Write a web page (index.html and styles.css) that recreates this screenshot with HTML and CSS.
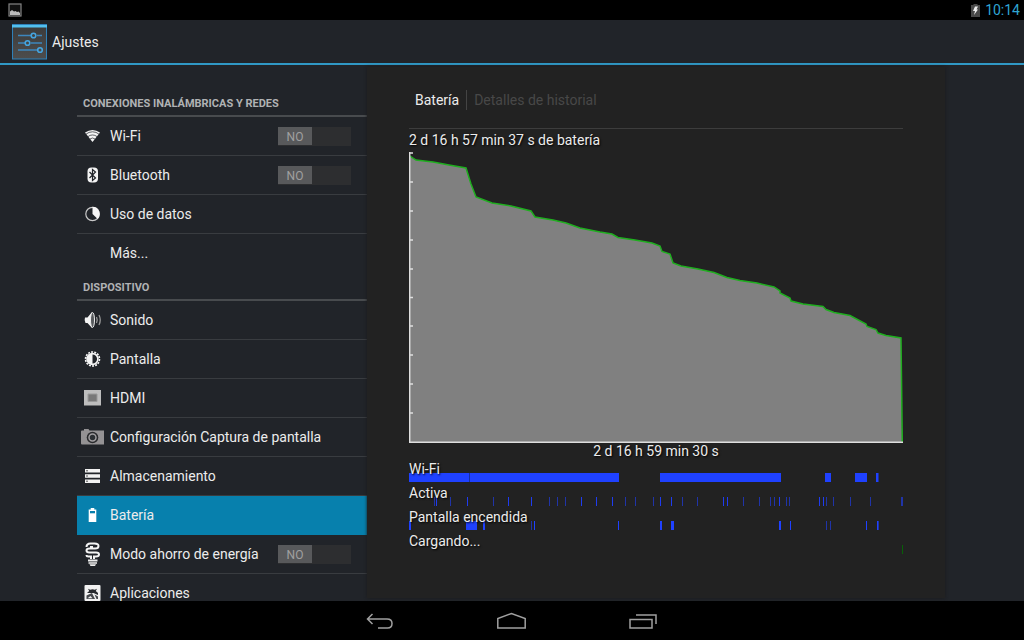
FILE: index.html
```html
<!DOCTYPE html>
<html lang="es">
<head>
<meta charset="utf-8">
<meta name="viewport" content="width=device-width, initial-scale=1">
<title>Ajustes</title>
<link rel="stylesheet" href="styles.css">
</head>
<body>
<div class="status">
  <svg class="status-shot" width="14" height="14" viewBox="0 0 14 14" aria-hidden="true"><rect x="1" y="1" width="12" height="12" fill="#111" stroke="#858585" stroke-width="1.200"/><path d="M2 12V8.500l2-1.500 2 1.500 1.500-.5 1.500 1 1.500-.5L12 10v2z" fill="#bbb"/></svg>
  <div class="status-end">
    <svg width="9" height="13" viewBox="0 0 9 13" aria-hidden="true"><path d="M2.500 0h4v1H9v12H0V1h2.500z" fill="#484848"/><path d="M4 2.500h3L5.500 5.500H7L3 11l1-4H2z" fill="#eee"/></svg>
    <time>10:14</time>
  </div>
</div>
<header class="appbar">
  <svg width="35" height="36" viewBox="0 0 35 36" aria-hidden="true">
    <defs><linearGradient id="tile" x1="0" y1="0" x2="0" y2="1"><stop offset="0" stop-color="#3a3a3a"/><stop offset="1" stop-color="#4d4d4d"/></linearGradient></defs>
    <rect x=".5" y=".5" width="34" height="34.500" fill="url(#tile)" stroke="#2f80b8"/>
    <path d="M0 1h35v2.500H0z" fill="#52c0ee"/>
    <path d="M6 11.500h13M25 11.500h5M6 19h7M19 19h11M6 26h19" stroke="#3d86bd" stroke-width="1.400" fill="none"/>
    <g fill="none" stroke="#45a5e0" stroke-width="1.600"><circle cx="21.500" cy="11.500" r="2.300"/><circle cx="15.500" cy="19" r="2.300"/><circle cx="28" cy="26" r="2.300"/></g>
  </svg>
  <h1>Ajustes</h1>
</header>
<main class="main">
  <nav class="side" aria-label="Ajustes">
    <h2>CONEXIONES INALÁMBRICAS Y REDES</h2>
    <ul>
      <li><a href="#wifi"><svg class="ico" viewBox="0 0 23 24" aria-hidden="true"><path d="M4 8.500q7.500-5 15 0L11.500 18z" fill="#f4f4f4"/><path d="M5 10.200a10 10 0 0 1 13 0M7 12.600a7 7 0 0 1 9 0M9 15a4 4 0 0 1 5 0" fill="none" stroke="#212429" stroke-width=".7"/></svg>Wi-Fi</a>
        <label class="switch"><input type="checkbox" role="switch" aria-label="Wi-Fi"><span>NO</span></label></li>
      <li><a href="#bluetooth"><svg class="ico" viewBox="0 0 23 24" aria-hidden="true"><rect x="6.500" y="4.500" width="10.500" height="15" rx="4" fill="#f4f4f4"/><path d="M8.500 9l6 6-3 2.500v-11l3 2.500-6 6" fill="none" stroke="#212429" stroke-width="1.200"/></svg>Bluetooth</a>
        <label class="switch"><input type="checkbox" role="switch" aria-label="Bluetooth"><span>NO</span></label></li>
      <li><a href="#datos"><svg class="ico" viewBox="0 0 23 24" aria-hidden="true"><circle cx="11.500" cy="12" r="6.700" fill="none" stroke="#c8c8c8" stroke-width="1.200"/><path d="M11.500 4.800a7.200 7.200 0 0 1 5.200 12.200L11.500 12z" fill="#f6f6f6"/></svg>Uso de datos</a></li>
      <li><a href="#mas"><span class="ico"></span>Más...</a></li>
    </ul>
    <h2>DISPOSITIVO</h2>
    <ul>
      <li><a href="#sonido"><svg class="ico" viewBox="0 0 23 24" aria-hidden="true"><path d="M4 9.500h2.500L11 4v16l-4.500-5H4.500Q3 12 4 9.500z" fill="#f4f4f4"/><ellipse cx="11.500" cy="12" rx="2" ry="7.500" fill="#55585b" stroke="#eee"/><path d="M15.500 9q1.400 3 0 6M18 7q2.500 5 0 10" fill="none" stroke="#999" stroke-width="1.300"/></svg>Sonido</a></li>
      <li><a href="#pantalla"><svg class="ico" viewBox="0 0 23 24" aria-hidden="true"><circle cx="11.500" cy="12" r="7" fill="none" stroke="#f4f4f4" stroke-width="1.600" stroke-dasharray="2 1.140"/><circle cx="11.500" cy="12" r="5.400" fill="#212429" stroke="#f4f4f4" stroke-width="1.700"/><path d="M11.500 6.500a5.500 5.500 0 0 0 0 11z" fill="#f4f4f4"/></svg>Pantalla</a></li>
      <li><a href="#hdmi"><svg class="ico" viewBox="0 0 23 24" aria-hidden="true"><path d="M3 4h17v15.500H3z" fill="#bdbdbd"/><path d="M7 8h9v7.500H7z" fill="#787878" stroke="#999"/></svg>HDMI</a></li>
      <li><a href="#captura"><svg class="ico" viewBox="0 0 23 24" aria-hidden="true"><path d="M1 5.500h2V4h4.500l1 1.500H23v14H1q-1 0-1-1v-12q0-1 1-1z" fill="#949294"/><circle cx="11.500" cy="12.500" r="5.800" fill="#292a2d"/><circle cx="11.500" cy="12.500" r="3.500" fill="#2c3034" stroke="#a09ea0" stroke-width="1.500"/></svg>Configuración Captura de pantalla</a></li>
      <li><a href="#almacenamiento"><svg class="ico" viewBox="0 0 23 24" aria-hidden="true"><path d="M4 5h15v3.600H4zM4 10.200h15v3.600H4zM4 15.400h15V19H4z" fill="#f2f2f2"/><path d="M5 6.800h2M5 12h2M5 17.200h2" stroke="#555"/></svg>Almacenamiento</a></li>
      <li class="current"><a href="#bateria" aria-current="page"><svg class="ico" viewBox="0 0 23 24" aria-hidden="true"><path d="M9.700 5h3.600v1.500h2V19H7.700V6.500h2z" fill="#fff"/><path d="M9 8h5v2.300H9z" fill="#0780ad"/></svg>Batería</a></li>
      <li><a href="#ahorro"><svg class="ico" viewBox="0 0 23 24" aria-hidden="true"><path d="M5.500 5q0-3.500 4-3.500h4Q17.500 1.500 17.500 4T14 6.500H8.500Q5.500 6.500 5.500 8.500t3 2H15q3 0 3 2t-3 2h-2v2.500M9 5h3M5.500 13q0 1.500 2 1.500H10V17" fill="none" stroke="#f4f4f4" stroke-width="2"/><path d="M7 17.500h9.500v2H7zM7.500 20.300h8.500v1.400H7.500zM8.500 22.300h6.500L14 24h-4.500z" fill="#eee"/></svg>Modo ahorro de energía</a>
        <label class="switch"><input type="checkbox" role="switch" aria-label="Modo ahorro de energía"><span>NO</span></label></li>
      <li><a href="#aplicaciones"><svg class="ico" viewBox="0 0 23 24" aria-hidden="true"><rect x="3.500" y="4" width="16" height="16" rx="1" fill="#f2f2f2"/><path d="M6 12l2.200-2-1.200-2.200 2.200 1q2.300-1.200 4.600 0l2.200-1-1.200 2.200L17 12v2l-4.500-2z" fill="#26292d"/><path d="M5.500 18v-3.500L11 12l3 6zM13.500 13.500l3.500 2V18h-1.500z" fill="#45484c"/><path d="M6.500 17.200l3-2.200 2 2.200z" fill="#eee"/></svg>Aplicaciones</a></li>
    </ul>
  </nav>
  <section class="panel">
    <ol class="crumbs">
      <li><a href="#bateria">Batería</a></li>
      <li aria-current="page">Detalles de historial</li>
    </ol>
    <h2 class="chart-title">2 d 16 h 57 min 37 s de batería</h2>
    <svg class="chart" viewBox="0 0 494 291" preserveAspectRatio="none" role="img" aria-label="Nivel de batería">
      <path fill="#808080" d="M1 290V4L7 8 24 10 40 13 57 16 62 32 67 45 83 51 102 54 122 59 126 65 144 68 157 71 171 76 191 80 203 82 209 85.500 226 88 243 91 251 94 253 99.500 261 102 264 111 272 114 289 117 305 120.500 318 125.500 331 128.500 348 131 365 135 371 139 371 141 381 146 382 149 394 152 414 154.500 417 157.500 425 160.500 441 163.500 457 172 458 174.500 467 177.500 469 181 477 183.500 492 186 493 290z"/>
      <path class="level" d="M1 4L7 8 24 10 40 13 57 16 62 32 67 45 83 51 102 54 122 59 126 65 144 68 157 71 171 76 191 80 203 82 209 85.500 226 88 243 91 251 94 253 99.500 261 102 264 111 272 114 289 117 305 120.500 318 125.500 331 128.500 348 131 365 135 371 139 371 141 381 146 382 149 394 152 414 154.500 417 157.500 425 160.500 441 163.500 457 172 458 174.500 467 177.500 469 181 477 183.500 492 186 493.300 290"/>
      <path class="axis" d="M.7 0V290.300H494M0 1H4M0 30H4M0 59H4M0 88H4M0 117H4M0 145.500H4M0 174H4M0 203H4M0 232H4M0 261H4"/>
    </svg>
    <p class="duration">2 d 16 h 59 min 30 s</p>
    <div class="track"><svg viewBox="0 0 494 9" preserveAspectRatio="none" aria-hidden="true"><path fill="#1f41ff" d="M0 0H210V9H0zM251 0H372V9H251zM416 0h6v9h-6zM446 0h12v9h-12zM467 0h2.500v9H467z"/><path fill="#172f9c" d="M60 0h1v9h-1z"/></svg><span>Wi-Fi</span></div>
    <div class="track"><svg viewBox="0 0 494 9" preserveAspectRatio="none" aria-hidden="true"><path fill="#1f3cf0" d="M27 0h1v9h-1zM58 0h1v9h-1zM99 0h1v9h-1zM122 0h1v9h-1zM172 0h1v9h-1zM187 0h1v9h-1zM203 0h1v9h-1zM251 0h1v9h-1zM262 0h1v9h-1zM314 0h1v9h-1zM318 0h1v9h-1zM370 0h1v9h-1zM410 0h1v9h-1zM414 0h1v9h-1z"/><path fill="#2034a8" d="M25 0h1v9h-1zM41 0h1v9h-1zM84 0h1v9h-1zM140 0h1v9h-1zM148 0h1v9h-1zM156 0h1v9h-1zM216 0h1v9h-1zM226 0h1v9h-1zM244 0h1v9h-1zM273 0h1v9h-1zM288 0h1v9h-1zM334 0h1v9h-1zM350 0h1v9h-1zM361 0h1v9h-1zM365 0h1v9h-1zM377 0h1v9h-1zM380 0h1v9h-1zM417 0h1v9h-1zM424 0h1v9h-1zM441 0h1v9h-1zM461 0h1v9h-1zM492 0h2v9h-2z"/></svg><span>Activa</span></div>
    <div class="track"><svg viewBox="0 0 494 9" preserveAspectRatio="none" aria-hidden="true"><path fill="#1f41ff" d="M0 0h2v9H0zM57 0h11v9H57zM74 0h2v9h-2zM125 0h1v9h-1zM209 0h1v9h-1zM251 0h2v9h-2zM262 0h3v9h-3zM370 0h2v9h-2zM381 0h1v9h-1zM457 0h1v9h-1zM468 0h1v9h-1z"/><path fill="#2034a8" d="M122 0h1v9h-1zM417 0h1v9h-1zM421 0h1v9h-1zM469 0h1v9h-1z"/></svg><span>Pantalla encendida</span></div>
    <div class="track"><svg viewBox="0 0 494 9" preserveAspectRatio="none" aria-hidden="true"><path fill="#086008" d="M493 0h1v9h-1z"/></svg><span>Cargando...</span></div>
  </section>
</main>
<footer class="sysnav">
  <button type="button" aria-label="Atrás"><svg width="30" height="18" viewBox="0 0 30 18"><path d="M6.500 2L1.500 7l5 5M1.500 7H21q5 0 5 4.500T21.500 16H12" fill="none" stroke="#a0a0a0" stroke-width="1.500"/></svg></button>
  <button type="button" aria-label="Inicio"><svg width="30" height="18" viewBox="0 0 30 18"><path d="M.8 16V6.500L14.500 1.500l13.700 5V16z" fill="none" stroke="#a0a0a0" stroke-width="1.500"/></svg></button>
  <button type="button" aria-label="Recientes"><svg width="30" height="18" viewBox="0 0 30 18"><path d="M2 7.500h22V16H2zM8 3h20v9" fill="none" stroke="#a0a0a0" stroke-width="1.500"/></svg></button>
</footer>
</body>
</html>
```
FILE: styles.css
```css
* { box-sizing: border-box; }
body {
  margin: 0;
  height: 100vh;
  display: flex;
  flex-direction: column;
  overflow: hidden;
  background: #212429;
  color: #ececec;
  font: 14px/20px Roboto, "Noto Sans", sans-serif;
}
h1, h2, p, ul, ol { margin: 0; padding: 0; font-weight: 400; }
h1, .chart-title { font-size: 14px; }
h1 { line-height: 22px; padding-top: 1px; }
ul, ol { list-style: none; }
a { color: inherit; text-decoration: none; }

.status {
  flex: none;
  height: 20px;
  padding: 0 4px 0 8px;
  display: flex;
  align-items: center;
  justify-content: space-between;
  background: #000;
}
.status-end { display: flex; align-items: center; gap: 5px; }
.status time { color: #2fa5d3; }

.appbar {
  flex: none;
  height: 45px;
  padding: 0 12px;
  display: flex;
  align-items: center;
  gap: 5px;
  border-bottom: 2px solid #3098c5;
}

.main {
  flex: 1;
  min-height: 0;
  padding: 0 79px 0 77px;
  display: grid;
  grid-template-columns: minmax(290px, 1fr) 2fr;
}
.side { overflow: hidden; padding-top: 24px; }
.side h2 {
  height: 28px;
  padding: 0 6px;
  line-height: 29px;
  font-size: 11px;
  font-weight: 700;
  color: #b0b2b4;
  border-bottom: 2px solid #484b4e;
}
.side li {
  height: 39px;
  padding: 0 16px 0 4px;
  display: flex;
  align-items: center;
  border-bottom: 1px solid #393c40;
}
.side li:last-child { border-color: transparent; }
.side a { flex: 1; display: flex; align-items: center; gap: 6px; white-space: nowrap; line-height: 22px; }
.side .current { background: #0780ad; border-color: #0780ad; }
.ico { flex: none; width: 23px; height: 24px; }

.switch { display: grid; width: 73px; height: 19px; }
.switch input, .switch span { grid-area: 1 / 1; }
.switch input { appearance: none; margin: 0; background: #2d2e30; }
.switch span {
  width: 34px;
  height: 18px;
  line-height: 20px;
  font-size: 12px;
  text-align: center;
  color: #a0a0a0;
  background: #58595b;
}

.panel {
  margin: 2px 0 3px;
  padding: 22px 42px 0;
  background: #222;
  box-shadow: 0 0 3px #1a1a1b;
}
.crumbs {
  display: flex;
  height: 40px;
  padding-left: 6px;
  border-bottom: 1px solid #3d3d3d;
}
.crumbs li { height: 20px; margin-top: 1px; }
.crumbs li + li { margin-left: 7px; padding-left: 7px; border-left: 1px solid #444; color: #484848; }
.chart-title { line-height: 23px; text-shadow: 1px 1px 2px #000; }
.chart { display: block; width: 100%; height: 291px; }
.level { fill: none; stroke: #1fae1f; stroke-width: 1.500; }
.axis { fill: none; stroke: #dedede; stroke-width: 1.500; }
.duration { height: 15px; line-height: 17px; text-align: center; text-shadow: 1px 1px 2px #000; }
.track { display: grid; height: 24px; }
.track svg, .track span { grid-area: 1 / 1; }
.track svg { align-self: end; width: 100%; height: 9px; }
.track span { line-height: 22px; text-shadow: 1px 1px 2px #000; }

.sysnav {
  flex: none;
  height: 39px;
  display: flex;
  justify-content: center;
  background: #000;
}
.sysnav button {
  width: 131px;
  padding: 0;
  border: 0;
  background: none;
  display: grid;
  place-items: center;
}
```
